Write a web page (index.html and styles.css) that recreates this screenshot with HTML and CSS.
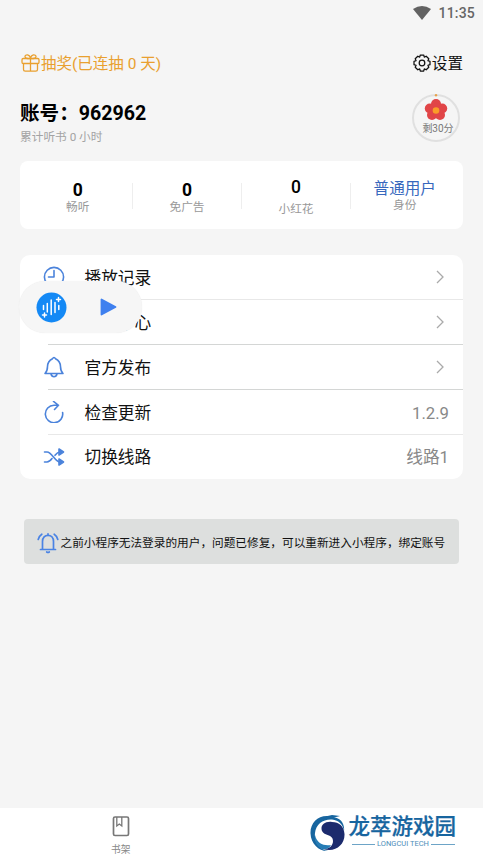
FILE: index.html
```html
<!DOCTYPE html>
<html lang="zh-CN">
<head>
<meta charset="utf-8">
<meta name="viewport" content="width=device-width, initial-scale=1">
<title>我的</title>
<link rel="stylesheet" href="styles.css">
</head>
<body>
<div class="app">
  <header class="status">
    <svg class="wifi" width="18" height="14" viewBox="0 0 18 14"><path d="M0 3Q9-3 18 3L9 14Z" fill="#626262"/></svg>
    <span>11:35</span>
  </header>
  <main class="content">
    <div class="topbar">
      <a class="lottery">
        <svg width="19" height="18" viewBox="0 0 19 18" fill="none" stroke="currentColor" stroke-width="1.3" stroke-linejoin="round"><rect x="1" y="4.5" width="17" height="5" rx="1.2"/><path d="M2.5 9.5V15.5Q2.5 17.2 4.2 17.2H14.8Q16.5 17.2 16.5 15.5V9.5M9.5 4.5V17M9.5 4.5C5 5 4 3.5 4 2.6C4 .2 8.8-.2 9.5 4.5C10.200-.2 15 .2 15 2.600C15 3.500 14 5 9.500 4.500"/></svg>
        <span>抽奖(已连抽 0 天)</span>
      </a>
      <a class="settings">
        <svg width="18" height="18" viewBox="0 0 18 18" fill="none" stroke="currentColor" stroke-width="1.25" stroke-linejoin="round"><path d="M7.300 1H10.700L11.300 3.100L13.200 2.200L15.800 4.800L14.900 6.700L17 7.300V10.700L14.900 11.300L15.800 13.200L13.200 15.800L11.300 14.900L10.700 17H7.300L6.700 14.900L4.800 15.800L2.200 13.200L3.100 11.300L1 10.700V7.300L3.100 6.700L2.200 4.800L4.800 2.200L6.700 3.100Z"/><circle cx="9" cy="9" r="2.800"/></svg>
        <span>设置</span>
      </a>
    </div>
    <section class="profile">
      <div>
        <h1 class="account">账号：962962</h1>
        <p class="listened">累计听书 0 小时</p>
      </div>
      <div class="reward">
        <svg width="24" height="27" viewBox="0 0 24 27"><circle cx="12" cy="1.200" r="1.200" fill="#e8a24b"/><g fill="#e14547"><circle cx="12" cy="10" r="5"/><circle cx="5.800" cy="14.500" r="5"/><circle cx="18.200" cy="14.500" r="5"/><circle cx="8" cy="21" r="5"/><circle cx="16" cy="21" r="5"/><circle cx="12" cy="16" r="7"/></g><circle cx="12" cy="16.500" r="3.300" fill="#fa9c28"/></svg>
        <span>剩30分</span>
      </div>
    </section>
    <section class="stats">
      <div class="stat"><b>0</b><span>畅听</span></div>
      <div class="stat"><b>0</b><span>免广告</span></div>
      <div class="stat stat-flower"><b>0</b><span>小红花</span></div>
      <div class="stat stat-role"><b>普通用户</b><span>身份</span></div>
    </section>
    <div class="menu-wrap">
      <ul class="menu">
        <li><svg class="icon" viewBox="0 0 22 22"><circle cx="11" cy="11" r="9.600"/><path d="M11 4.500V11H5.500"/></svg><div class="row light"><span>播放记录</span><svg class="chevron" viewBox="0 0 8 14"><path d="M1 1L7 7L1 13"/></svg></div></li>
        <li><svg class="icon" viewBox="0 0 22 22"><circle cx="11" cy="6" r="4"/><path d="M2 19C2 9 20 9 20 19Z"/></svg><div class="row"><span>个人中心</span><svg class="chevron" viewBox="0 0 8 14"><path d="M1 1L7 7L1 13"/></svg></div></li>
        <li><svg class="icon" viewBox="0 0 22 22"><path d="M2 17.500C4 15.500 4.500 14 4.500 10.500C4.500 6 7 4 9.500 2.700Q11 .2 12.500 2.700C15 4 17.500 6 17.500 10.500C17.500 14 18 15.500 20 17.500ZM8 18Q8.700 20.700 11 20.700Q13.300 20.700 14 18"/></svg><div class="row"><span>官方发布</span><svg class="chevron" viewBox="0 0 8 14"><path d="M1 1L7 7L1 13"/></svg></div></li>
        <li><svg class="icon" viewBox="0 0 22 22"><path d="M19.600 11.500A8.700 8.700 0 1 1 11 4.300H15.500M10.500 .4L15.500 4.300L11.500 8.500"/></svg><div class="row light"><span>检查更新</span><span class="value">1.2.9</span></div></li>
        <li><svg class="icon" viewBox="0 0 22 22"><path d="M1.500 6H4C9 6 12 16 17 16H18M1.500 16H4C6 16 7.500 14.500 9 12.500M12 9.300C13.500 7.300 15 6 17 6H18"/><path class="solid" d="M16 3L20.500 6L16 9ZM16 13L20.500 16L16 19Z"/></svg><div class="row last"><span>切换线路</span><span class="value">线路1</span></div></li>
      </ul>
      <div class="player">
        <svg width="31" height="31" viewBox="0 0 31 31"><circle cx="15.500" cy="15.500" r="15" fill="#1489f5"/><path d="M7.500 13.500V17.500M11.300 11.500V20M15.200 8V22.500M19 10.500V20.500M22.800 13.500V17.500M22.500 5.500V9.500M20.500 7.500H24.500M8.500 21V25M6.500 23H10.500" fill="none" stroke="#fff" stroke-width="1.500" stroke-linecap="round"/></svg>
        <svg width="17" height="18" viewBox="0 0 17 18"><path d="M1.500 1.500V16.500L15.500 9Z" fill="#3f80ef" stroke="#3f80ef" stroke-width="1.800" stroke-linejoin="round"/></svg>
      </div>
    </div>
    <div class="notice">
      <svg width="22" height="22" viewBox="0 0 22 22" fill="none" stroke="#4a83e4" stroke-width="1.700" stroke-linecap="round" stroke-linejoin="round"><path d="M3.500 17.500H18.500M5.500 17.500V9.500C5.500 5.500 8 3.300 11 3.300C14 3.300 16.500 5.500 16.500 9.500V17.500M11 1.800V3.300M1.200 7.500Q2 4 4.800 2.200M20.800 7.500Q20 4 17.200 2.200"/><path d="M9.700 20Q11 20.800 12.300 20"/></svg>
      <span>之前小程序无法登录的用户，问题已修复，可以重新进入小程序，绑定账号</span>
    </div>
  </main>
  <nav class="tabs">
    <a class="tab">
      <svg width="18" height="21" viewBox="0 0 18 21" fill="none" stroke="#777" stroke-width="1.700"><rect x="1.500" y="1" width="15" height="18.500" rx="1.500"/><path d="M4.800 1V10L7.300 8L9.800 10V1" stroke-width="1.300"/></svg>
      <span>书架</span>
    </a>
    <a class="brand">
      <svg width="36" height="38" viewBox="0 0 36 38"><path d="M23 3C10-1 0 8 .5 19.500C1 30 9 37.500 18 37C9 35 4 28 5 19C6 10 13 5 22 5.500C29 6 33 11 34 17C35 9 30 4 24 3.500L30 2L22 1L13 3Z" fill="#17659f"/><path d="M22 8C14 7 10 12 12 17C14 22 23 20 23 27C23 32 19 35 13 35C25 39 35 31 34.500 20C34 12 29 8 22 8Z" fill="#1c2b6d"/><path d="M5 21C7 30 14 32 21 31C19 35 15 36 12 35C7 33 4 27 5 21Z" fill="#267cb5"/></svg>
      <span class="brand-text"><strong>龙萃游戏园</strong><small>LONGCUI TECH</small></span>
    </a>
  </nav>
</div>
</body>
</html>
```
FILE: styles.css
```css
* { box-sizing: border-box; }
body { margin: 0; background: #f5f5f5; color: #111; font-family: Roboto, "Noto Sans CJK SC", sans-serif; }
svg { display: block; flex: none; }
h1, p, ul { margin: 0; padding: 0; }
.app { display: flex; flex-direction: column; height: 858px; overflow: hidden; }
.status { display: flex; justify-content: flex-end; align-items: center; gap: 7px; height: 25px; padding-right: 8px; color: #666; font-size: 14px; font-weight: 500; letter-spacing: .2px; }
.content { flex: 1; padding: 0 20px; }
.topbar { display: flex; justify-content: space-between; align-items: center; height: 24px; margin-top: 26px; font-size: 15.6px; line-height: 24px; }
.lottery, .settings { display: flex; align-items: center; gap: 1px; }
.lottery { color: #e9a02f; padding-left: 1px; }
.lottery span { font-size: 15.5px; }
.topbar span { padding-top: 2px; }
.topbar svg { margin-bottom: 1px; }
.profile { display: flex; justify-content: space-between; height: 72px; margin-top: 14px; }
.account { height: 30px; margin-top: 10px; font-size: 19.6px; line-height: 30px; font-weight: 700; color: #000; }
.listened { height: 18px; margin-top: -1px; font-size: 11.7px; line-height: 18px; color: #a3a3a3; }
.reward { display: flex; flex-direction: column; align-items: center; width: 48px; height: 48px; margin: 5px 3px 0 0; border: 2px solid #e0e0e0; border-radius: 50%; color: #777; font-size: 10px; line-height: 14px; white-space: nowrap; }
.reward svg { margin-top: -2px; }
.reward span { padding: 1px 0 0 4px; }
.stats { display: grid; grid-template-columns: 112.5px 109px 109px 1fr; height: 68px; padding-top: 22px; background: #fff; border-radius: 8px; }
.stat { display: flex; flex-direction: column; align-items: center; height: 26px; border-right: 1px solid #eee; text-align: center; white-space: nowrap; }
.stat:last-child { border-right: 0; }
.stat:first-child { padding-left: 4px; }
.stat b { flex: none; height: 17px; margin-top: -1px; font-size: 17.5px; line-height: 17px; font-weight: 700; color: #000; }
.stat span { flex: none; height: 18px; margin-top: -1px; font-size: 11.7px; line-height: 18px; color: #999; }
.stat:nth-child(n+2) { padding-left: 1px; }
.stat-flower b { margin-top: -4px; height: 22px; font-weight: 500; }
.stat.stat-role { padding: 0 4px 0 0; }
.stat-role b { margin-top: -2px; font-size: 15.6px; font-weight: 400; color: #3767bd; }
.stat-role span { margin-top: -2px; }
.menu-wrap { position: relative; margin-top: 26px; }
.menu { list-style: none; height: 224px; background: #fff; border-radius: 10px; overflow: hidden; }
.menu li { display: grid; grid-template-columns: 28px 1fr; height: 45px; }
.icon { width: 22px; height: 22px; margin: 11px 0 0 23px; fill: none; stroke: #4b83db; stroke-width: 1.6; stroke-linecap: round; stroke-linejoin: round; }
.icon .solid { fill: #4b83db; }
.row { display: flex; justify-content: space-between; align-items: center; padding: 0 14px 0 36.500px; border-bottom: 1px solid #d4d6d5; font-size: 16.7px; line-height: 24px; }
.row > span { padding-top: 3px; }
.row.light { border-color: #e8e8e8; }
.row.last { border-bottom: 0; }
.row.last > span { padding-top: 1px; }
.row .value { color: #888; }
.chevron { width: 8px; height: 14px; margin-right: 5px; fill: none; stroke: #aaa; stroke-width: 1.3; }
.player { position: absolute; left: -1px; top: 26px; display: flex; align-items: center; gap: 33px; width: 123px; height: 52px; padding-left: 17px; background: #f6f6f6; border-radius: 26px; box-shadow: 0 0 1px #e6e6e6; }
.notice { display: flex; align-items: center; height: 45px; margin: 40px 4px 0; padding: 2px 13px 0; background: #dddfde; border-radius: 4px; font-size: 11.67px; line-height: 20px; white-space: nowrap; }
.notice span { padding-left: 1.5px; }
.tabs { display: grid; grid-template-columns: 1fr 1fr; height: 50px; background: #fff; }
.tab { display: flex; flex-direction: column; align-items: center; padding-top: 8px; color: #888; font-size: 9.7px; line-height: 14px; }
.tab span { margin-top: 6px; }
.brand { display: flex; align-items: flex-start; gap: 3px; padding: 6px 0 0 68px; color: #17659f; }
.brand-text { display: flex; flex-direction: column; white-space: nowrap; }
.brand strong { height: 26px; font-size: 21.5px; line-height: 26px; font-weight: 500; -webkit-text-stroke: .25px currentColor; }
.brand small { display: flex; align-items: center; gap: 2px; width: 103px; height: 8px; margin-left: 3px; font-size: 7.5px; line-height: 8px; color: #4d8db9; }
.brand small::before, .brand small::after { content: ""; flex: 1; height: 1px; background: #6da4c7; }
```
